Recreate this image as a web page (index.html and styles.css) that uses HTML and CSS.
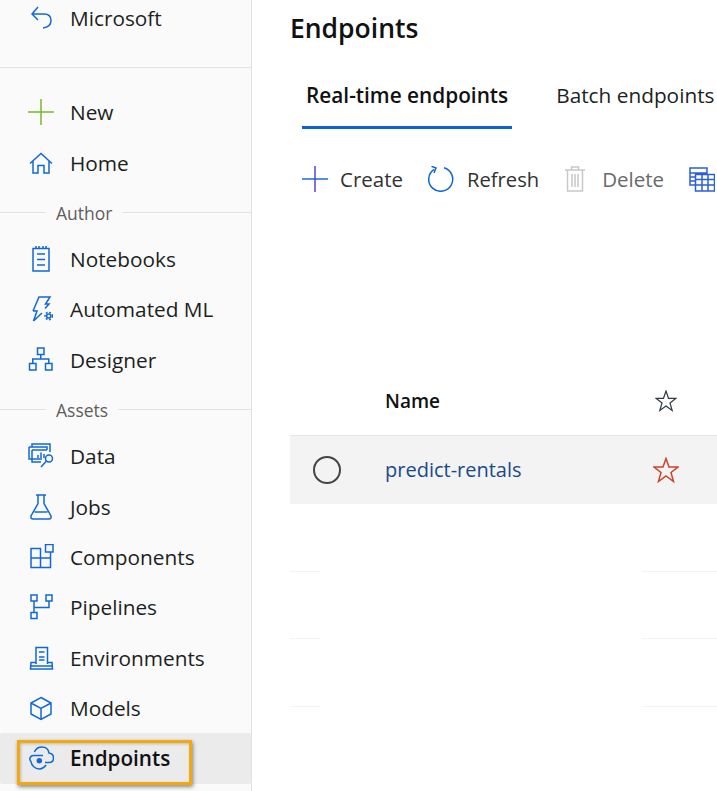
FILE: index.html
```html
<!DOCTYPE html>
<html lang="en">
<head>
    <meta charset="UTF-8">
    <title>Endpoints</title>
    <link rel="stylesheet" href="styles.css">
</head>
<body>
    <div class="page">
        <nav class="sidebar">
            <a class="nav-row nav-back">
                <svg class="icon" viewBox="0 0 26 26"><path d="M10 2L4 9L10 15M4 9H16Q23 9 23 15.500Q23 22 15 23"/></svg>
                <span>Microsoft</span>
            </a>
            <div class="nav-divider"></div>
            <a class="nav-row">
                <svg class="icon icon-new" viewBox="0 0 26 26"><path d="M13 0V26M0 13H26"/></svg>
                <span>New</span>
            </a>
            <a class="nav-row">
                <svg class="icon" viewBox="0 0 26 26"><path d="M2 13.500L13 3.500L24 13.500M5 11V23H10V15.500H16V23H21V11"/></svg>
                <span>Home</span>
            </a>
            <div class="nav-heading"><i></i><span>Author</span><i></i></div>
            <a class="nav-row">
                <svg class="icon" viewBox="0 0 26 26"><path d="M5 2.500H21V25H5ZM9 8H17M9 13.500H17M9 19H17M8 0V2.500M11 0V2.500M15 0V2.500M18 0V2.500"/></svg>
                <span>Notebooks</span>
            </a>
            <a class="nav-row">
                <svg class="icon" viewBox="0 0 26 26"><path d="M5 15L11 1H22L17.500 8H21L17 12.500M14 17L5.500 25L9 15H5"/><circle cx="20.700" cy="20" r="2"/><circle class="gear" cx="20.700" cy="20" r="3.600"/></svg>
                <span>Automated ML</span>
            </a>
            <a class="nav-row">
                <svg class="icon" viewBox="0 0 26 26"><path d="M9.500 1H16V7.500H9.500ZM1.500 16.500H8V23H1.500ZM17.500 16.500H24V23H17.500ZM12.750 7.500V12M4.750 16.500V12H20.750V16.500"/></svg>
                <span>Designer</span>
            </a>
            <div class="nav-heading nav-heading-assets"><i></i><span>Assets</span><i></i></div>
            <a class="nav-row">
                <svg class="icon" viewBox="0 0 26 26"><path d="M4 4V1H22V9M1 4H19V7M1 4V16H14M4 7V19H13M4 7H19"/><path d="M10 15V12M13 15V9.500M16 15V11"/><circle cx="21" cy="15.500" r="3.500"/><path d="M18.500 18L13 24"/></svg>
                <span>Data</span>
            </a>
            <a class="nav-row">
                <svg class="icon" viewBox="0 0 26 26"><path d="M8 1H18M10 1V9.500L3 22Q2.500 25 5 25H21Q23.500 25 23 22L16 9.500V1M6.500 18H19.500"/></svg>
                <span>Jobs</span>
            </a>
            <a class="nav-row">
                <svg class="icon" viewBox="0 0 26 26"><path d="M3 4.500H12.500V14H3ZM3 14H12.500V23.500H3ZM12.500 14H22.500V23.500H12.500ZM17.500 0.500H25V8H17.500ZM22.500 8V14"/></svg>
                <span>Components</span>
            </a>
            <a class="nav-row">
                <svg class="icon" viewBox="0 0 26 26"><path d="M3 1H9V7H3ZM18 1H24V7H18ZM3 18.500H9V24.500H3ZM6 7V18.500M6 13.500H21V7"/></svg>
                <span>Pipelines</span>
            </a>
            <a class="nav-row">
                <svg class="icon" viewBox="0 0 26 26"><path d="M8 19V2.500H19.500V19M11 7H16.500M11 12H16.500M11 15H16.500M8 17.500H3L2.500 24H24.500L24 17.500H19.500M3 21H24"/></svg>
                <span>Environments</span>
            </a>
            <a class="nav-row">
                <svg class="icon" viewBox="0 0 26 26"><path d="M13 2.500L23 8V19L13 24.500L3 19V8ZM3 8L13 13.500L23 8M13 13.500V24.500"/></svg>
                <span>Models</span>
            </a>
            <a class="nav-row nav-active">
                <svg class="icon" viewBox="0 0 26 26"><path d="M6.500 7Q8.500 2 14 2Q20 2 21 8Q25.500 8.500 25.500 13Q25.500 17.500 21 17.500H17"/><path d="M15 10.500H6A3.500 3.500 0 0 0 3 16.500A8.500 8.500 0 0 0 11.300 24A8.500 8.500 0 0 0 18 20"/><circle class="dot" cx="11.300" cy="15.700" r="2"/></svg>
                <span>Endpoints</span>
                <div class="callout"></div>
            </a>
        </nav>

        <main class="content">
            <h1 class="title">Endpoints</h1>
            <div class="tabs">
                <div class="tab tab-active">Real-time endpoints</div>
                <div class="tab">Batch endpoints</div>
            </div>
            <div class="toolbar">
                <button class="tool tool-create">
                    <svg width="26" height="26" viewBox="0 0 26 26"><path class="plus-h" d="M0 13H26"/><path class="plus-v" d="M13 0V26"/></svg>
                    <span>Create</span>
                </button>
                <button class="tool tool-refresh">
                    <svg width="26" height="26" viewBox="0 0 26 26"><path class="stroke-blue" d="M16 1.700A12 12 0 1 1 6 3.300M3.500 0.300L8 2L6 7"/></svg>
                    <span>Refresh</span>
                </button>
                <button class="tool tool-delete" disabled>
                    <svg width="20" height="26" viewBox="0 0 20 26"><path class="stroke-grey" d="M0 4H20M6.500 4V1H13.500V4M2.500 4V25H17.500V4M7 8V21M10 8V21M13 8V21"/></svg>
                    <span>Delete</span>
                </button>
                <button class="tool tool-columns">
                    <svg width="26" height="26" viewBox="0 0 26 26"><path class="stroke-indigo" d="M1 2H18V7H1ZM1 7V19H6M1 11H6M1 15H6M6.500 8.500H25.500V25H6.500ZM6.500 13.500H25.500M6.500 19H25.500M13 8.500V25M19 8.500V25"/></svg>
                </button>
            </div>
            <div class="list">
                <div class="list-row list-head">
                    <div></div>
                    <div class="cell-name">Name</div>
                    <div class="cell-star">
                        <svg width="22" height="22" viewBox="0 0 22 22"><path class="star-dark" d="M11 1L13.500 8.300H21L15 12.900L17.200 20.500L11 16L4.800 20.500L7 12.900L1 8.300H8.500Z"/></svg>
                    </div>
                </div>
                <div class="list-row list-item">
                    <div class="cell-select"><span class="radio"></span></div>
                    <div class="cell-name"><a class="link">predict-rentals</a></div>
                    <div class="cell-star">
                        <svg width="26" height="26" viewBox="0 0 26 26"><path class="star-red" d="M13 1.500L16 10H25L18 15.500L20.500 24.500L13 19L5.500 24.500L8 15.500L1 10H10Z"/></svg>
                    </div>
                </div>
                <div class="list-row list-empty"><div class="edge"></div><div></div><div class="edge-end"></div></div>
                <div class="list-row list-empty"><div class="edge"></div><div></div><div class="edge-end"></div></div>
                <div class="list-row list-empty"><div class="edge"></div><div></div><div class="edge-end"></div></div>
            </div>
        </main>
    </div>
</body>
</html>
```

FILE: styles.css
```css
* {
    box-sizing: border-box;
}
html, body {
    margin: 0;
    height: 100%;
    overflow: hidden;
    background: #fff;
}
body {
    font-family: "Open Sans", "Noto Sans", "Liberation Sans", sans-serif;
    font-size: 20.5px;
    color: #201f1e;
}
.page {
    display: flex;
    width: 717px;
    height: 791px;
    overflow: hidden;
}

/* left nav */
.sidebar {
    flex: 0 0 252px;
    height: 791px;
    background: #fafafa;
    border-right: 1px solid #e1e1e1;
    font-size: 20.8px;
}
.nav-row {
    position: relative;
    display: flex;
    align-items: center;
    gap: 16px;
    height: 50.4px;
    padding-left: 28px;
}
.nav-back {
    height: 36px;
}
.nav-divider {
    height: 1px;
    margin: 31px 0 19px;
    background: #e1e1e1;
}
.nav-heading {
    display: flex;
    align-items: center;
    gap: 10px;
    height: 42px;
    margin-top: 4px;
    font-size: 17.5px;
    color: #605e5c;
}
.nav-heading i {
    flex: 1;
    height: 1px;
    background: #e1e1e1;
}
.nav-heading i:first-child {
    flex: 0 0 46px;
}
.nav-active {
    background: #ebebeb;
    border-radius: 2px;
    font-size: 20.7px;
    font-weight: 600;
    color: #111;
}
.callout {
    position: absolute;
    left: 17px;
    top: 7px;
    width: 175px;
    height: 45px;
    border: 3px solid #f5a80c;
    box-shadow: 1px 2px 4px rgba(0, 0, 0, 0.45), inset 1px 1px 3px rgba(0, 0, 0, 0.2);
}
.icon {
    flex: 0 0 26px;
    width: 26px;
    height: 26px;
    fill: none;
    stroke: #1068d6;
    stroke-width: 1.5;
}
.icon-new {
    stroke: #7ab829;
}
.icon .gear {
    stroke-width: 1.6;
    stroke-dasharray: 1.8 1.6;
}
.icon .dot {
    fill: #1068d6;
}

/* main area */
.content {
    flex: 1;
    min-width: 0;
    padding-left: 38px;
}
.title {
    height: 56px;
    margin: 0;
    font-size: 26.5px;
    font-weight: 600;
    line-height: 56px;
    color: #111;
}
.tabs {
    display: flex;
    gap: 40px;
    height: 73px;
    margin-left: 12px;
    white-space: nowrap;
}
.tab {
    height: 73px;
    padding: 0 4px;
    line-height: 78px;
    font-size: 20.8px;
}
.tab-active {
    border-bottom: 3px solid #0f62d6;
    font-weight: 600;
    color: #111;
}
.toolbar {
    display: flex;
    align-items: center;
    height: 26px;
    margin: 37px 0 0 12px;
    white-space: nowrap;
}
.tool {
    display: flex;
    align-items: center;
    gap: 12px;
    padding: 0;
    border: 0;
    background: none;
    font: inherit;
    color: #323130;
}
.tool-create {
    margin-right: 25px;
}
.tool-refresh {
    gap: 13px;
    margin-right: 26px;
    font-size: 20.2px;
}
.tool-delete {
    margin-right: 25px;
    gap: 17px;
    color: #69696b;
}
.tool svg {
    fill: none;
    stroke-width: 1.5;
}
.plus-h {
    stroke: #1c6ad8;
}
.plus-v {
    stroke: #5b3fd0;
}
.stroke-blue {
    stroke: #1068d6;
}
.stroke-grey {
    stroke: #c8c8c8;
}
.stroke-indigo {
    stroke: #2b5fd9;
}

/* list */
.list {
    margin-top: 175px;
}
.list-row {
    display: grid;
    grid-template-columns: 95px 257px 1fr;
    align-items: center;
    height: 68px;
}
.list-head {
    height: 69px;
    border-bottom: 1px solid #e6e6e6;
    font-weight: 600;
    font-size: 19px;
    color: #111;
}
.list-item {
    background: #f3f3f3;
    font-size: 20px;
}
.list-item .cell-name {
    padding-bottom: 2px;
}
.list-empty {
    align-items: end;
    height: 67.500px;
}
.edge {
    width: 30px;
    height: 1px;
    background: #f3f3f3;
}
.edge-end {
    height: 1px;
    background: #f3f3f3;
}
.cell-select {
    padding-left: 23px;
    line-height: 0;
}
.radio {
    display: inline-block;
    width: 28px;
    height: 28px;
    border: 2px solid #444;
    border-radius: 50%;
}
.cell-star {
    display: flex;
    justify-content: center;
    width: 48px;
}
.cell-star svg {
    fill: none;
}
.star-dark {
    stroke: #2f3a48;
    stroke-width: 1.2;
}
.star-red {
    stroke: #c8452a;
    stroke-width: 1.5;
}
.link {
    color: #1b4a8a;
}
```
